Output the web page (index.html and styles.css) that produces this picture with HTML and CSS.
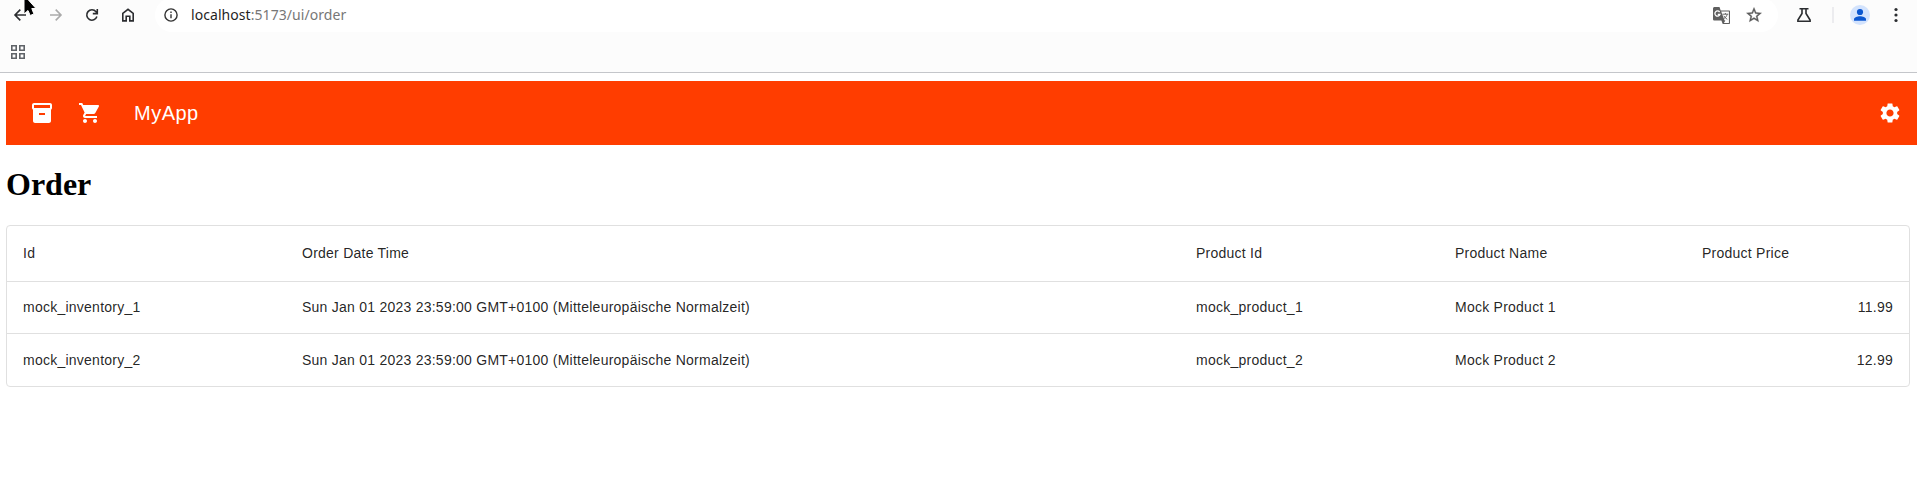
FILE: index.html
```html
<!DOCTYPE html>
<html lang="en">
<head>
<meta charset="utf-8">
<title>Order</title>
<link rel="stylesheet" href="styles.css">
</head>
<body>
<header class="browser">
  <div class="toolbar">
    <nav class="nav-buttons">
      <svg class="ico" viewBox="0 0 16 16"><path d="M14 8H3M8.300 2.600 3 8l5.300 5.400" /></svg>
      <svg class="ico ico-disabled" viewBox="0 0 16 16"><path d="M2 8h11M7.700 2.600 13 8l-5.300 5.400" /></svg>
      <svg class="ico" viewBox="0 0 16 16"><path d="M12.900 9.600A5.200 5.200 0 1 1 12 4.700l1.200 1.400M13.300 2v4.600H8.800" /></svg>
      <svg class="ico" viewBox="0 0 16 16"><path d="M2.800 13.900V6.300L8 2.300l5.200 4v7.600H9.800V9.200H6.200v4.700z" /></svg>
    </nav>
    <div class="omnibox">
      <svg class="info" viewBox="0 0 16 16"><circle cx="8" cy="8" r="6.100" /><path d="M8 7.300v4M8 4.600v1.500" /></svg>
      <span class="url"><span class="host">localhost</span>:5173/ui/order</span>
      <svg class="translate" viewBox="0 0 17 17"><path class="solid" d="M1.500 0h5l1.200 3.500H16c.6 0 1 .4 1 1V16c0 .6-.4 1-1 1H9.700L8.400 13.600H1.500C.7 13.600 0 13 0 12.200V1.500C0 .7.7 0 1.500 0z"/><path class="paper" d="M8.200 4.600h7.700v11.300h-5l1.500-2.300h-.8z"/><path class="g" d="M6.600 5A2.600 2.600 0 1 0 7 7.300H4.800"/><path class="glyph" d="M9.400 7.200h5.900M12.400 6v1.200M14.200 7.300c-.5 2-2 3.600-3.700 4.700M10.800 8.800c.8 1.500 2 2.700 3.500 3.500"/></svg>
      <svg class="star" viewBox="0 0 24 24"><path d="m22 9.240-7.190-.62L12 2 9.190 8.630 2 9.240l5.460 4.730L5.820 21 12 17.270 18.180 21l-1.630-7.030L22 9.240zM12 15.400l-3.760 2.270 1-4.280-3.320-2.880 4.380-.38L12 6.100l1.710 4.040 4.380.38-3.320 2.880 1 4.280L12 15.400z"/></svg>
    </div>
    <div class="tools">
      <svg class="ico flask" viewBox="0 0 16 16"><path d="M3.500 1.700h9M6 1.700v4.700L1.900 13.100v1.100h12.200v-1.100L10 6.400V1.700"/></svg>
      <span class="divider"></span>
      <svg class="avatar" viewBox="0 0 20 20"><circle class="avatar-bg" cx="10" cy="10" r="10"/><circle cx="10" cy="7" r="3.100"/><path d="M4 15.800v-1.500c0-2 3.500-3 6-3s6 1 6 3v1.500z"/></svg>
      <svg class="menu" viewBox="0 0 4 16"><circle cx="2" cy="2.500" r="1.600"/><circle cx="2" cy="8" r="1.600"/><circle cx="2" cy="13.500" r="1.600"/></svg>
    </div>
  </div>
  <div class="bookmarks">
    <svg class="apps" viewBox="0 0 14 14"><path d="M.8.8h4.400v4.400H.8zM8.800.8h4.400v4.400H8.800zM.8 8.800h4.400v4.400H.8zM8.800 8.800h4.400v4.400H8.800z"/></svg>
  </div>
</header>
<svg class="pointer" viewBox="0 0 16 20"><path d="M2-5v19l4-3.500 2.200 5 3.700-1.600L9.800 8.500H14z"/></svg>

<main class="page">
  <div class="appbar">
    <svg class="mui" viewBox="0 0 24 24"><path d="M20 2H4c-1 0-2 .9-2 2v3.010c0 .72.43 1.340 1 1.690V20c0 1.100 1.100 2 2 2h14c.9 0 2-.9 2-2V8.700c.57-.35 1-.97 1-1.690V4c0-1.100-1-2-2-2zm-5 12H9v-2h6v2zm5-7H4V4h16v3z"/></svg>
    <svg class="mui cart" viewBox="0 0 24 24"><path d="M7 18c-1.100 0-1.990.9-1.990 2S5.900 22 7 22s2-.9 2-2-.9-2-2-2zM1 2v2h2l3.600 7.590-1.350 2.450c-.16.28-.25.61-.25.96 0 1.100.9 2 2 2h12v-2H7.420c-.14 0-.25-.11-.25-.25l.03-.12.9-1.630h7.450c.75 0 1.410-.41 1.750-1.030l3.580-6.490c.08-.14.12-.31.12-.48 0-.55-.45-1-1-1H5.210l-.94-2H1zm16 16c-1.100 0-1.990.9-1.990 2s.89 2 1.990 2 2-.9 2-2-.9-2-2-2z"/></svg>
    <span class="brand">MyApp</span>
    <svg class="mui" viewBox="0 0 24 24"><path d="M19.140 12.940c.04-.3.06-.61.06-.94 0-.32-.02-.64-.07-.94l2.030-1.580c.18-.14.23-.41.12-.61l-1.920-3.320c-.12-.22-.37-.29-.59-.22l-2.390.96c-.5-.38-1.030-.7-1.620-.94l-.36-2.540c-.04-.24-.24-.41-.48-.41h-3.840c-.24 0-.43.17-.47.41l-.36 2.540c-.59.24-1.130.57-1.620.94l-2.390-.96c-.22-.08-.47 0-.59.22L2.740 8.870c-.12.21-.08.47.12.61l2.030 1.580c-.05.3-.09.63-.09.94s.02.64.07.94l-2.030 1.580c-.18.14-.23.41-.12.61l1.920 3.320c.12.22.37.29.59.22l2.390-.96c.5.38 1.030.7 1.620.94l.36 2.540c.05.24.24.41.48.41h3.840c.24 0 .44-.17.47-.41l.36-2.540c.59-.24 1.130-.56 1.620-.94l2.390.96c.22.08.47 0 .59-.22l1.920-3.320c.12-.22.07-.47-.12-.61l-2.010-1.580zM12 15.600c-1.980 0-3.600-1.620-3.600-3.600s1.620-3.600 3.600-3.600 3.600 1.620 3.600 3.600-1.620 3.600-3.600 3.600z"/></svg>
  </div>
  <h1 class="title">Order</h1>
  <div class="grid">
    <div class="row head"><span>Id</span><span>Order Date Time</span><span>Product Id</span><span>Product Name</span><span>Product Price</span></div>
    <div class="row first"><span>mock_inventory_1</span><span>Sun Jan 01 2023 23:59:00 GMT+0100 (Mitteleuropäische Normalzeit)</span><span>mock_product_1</span><span>Mock Product 1</span><span class="num">11.99</span></div>
    <div class="row last"><span>mock_inventory_2</span><span>Sun Jan 01 2023 23:59:00 GMT+0100 (Mitteleuropäische Normalzeit)</span><span>mock_product_2</span><span>Mock Product 2</span><span class="num">12.99</span></div>
  </div>
</main>
</body>
</html>
```
FILE: styles.css
```css
* { box-sizing: border-box; }
body { margin: 0; background: #fff; overflow: hidden; }
svg { display: block; flex: none; }

.browser { height: 73px; background: #fcfcfc; border-bottom: 1px solid #c4c6ca; }
.toolbar { display: flex; height: 32px; }
.nav-buttons { display: flex; gap: 20px; padding: 7px 0 0 12px; width: 155px; }
.ico { width: 16px; height: 16px; fill: none; stroke: #2b2d30; stroke-width: 1.6; }
.ico-disabled { stroke: #aaa; }

.omnibox { display: flex; align-items: center; width: 1623px; height: 34px; margin-top: -2px; padding: 0 15px 0 8px; border-radius: 17px; background: #fff; }
.info { width: 16px; height: 16px; fill: none; stroke: #333; stroke-width: 1.4; }
.url { flex: 1; margin-left: 12px; font: 14px/20px "Noto Sans", sans-serif; letter-spacing: 0.06px; color: #777; }
.host { color: #1f1f1f; }
.translate { width: 17px; height: 17px; margin-right: 15px; }
.solid { fill: #5f5f5f; }
.paper { fill: #fff; }
.g { fill: none; stroke: #fff; stroke-width: 1.3; }
.glyph { fill: none; stroke: #666; stroke-width: 1; }
.star { width: 18px; height: 18px; fill: #5a5a5a; stroke: #5a5a5a; stroke-width: 0.5; }

.tools { display: flex; align-items: center; height: 30px; padding-left: 18px; }
.flask { stroke-width: 1.6; }
.divider { width: 2px; height: 16px; margin-left: 20px; background: #ececef; }
.avatar { width: 20px; height: 20px; margin-left: 16px; fill: #0b57d0; }
.avatar-bg { fill: #d3e3fd; }
.menu { width: 4px; height: 16px; margin-left: 24px; fill: #2b2d30; }
.bookmarks { padding: 13px 0 0 11px; }
.apps { width: 14px; height: 14px; fill: none; stroke: #5f6368; stroke-width: 1.6; }
.pointer { position: absolute; left: 22px; top: 0; width: 16px; height: 20px; fill: #000; stroke: #fff; stroke-width: 1; }

.page { padding: 8px 0 0 6px; }
.appbar { display: flex; align-items: center; height: 64px; padding: 0 15px 0 24px; background: #ff3d00; color: #fff; }
.mui { width: 24px; height: 24px; fill: #fff; }
.cart { margin-left: 24px; }
.brand { flex: 1; margin-left: 32px; font: 500 20px/32px "Liberation Sans", Arial, sans-serif; letter-spacing: 0.5px; }
.title { margin: 21px 0 22px; font: bold 32px/37px "Liberation Serif", "Times New Roman", serif; color: #000; }

.grid { width: 1904px; border: 1px solid #e0e0e0; border-radius: 4px; font: 14px/20px "Liberation Sans", Arial, sans-serif; letter-spacing: 0.245px; color: rgba(0, 0, 0, 0.87); }
.row { display: grid; grid-template-columns: 279px 894px 259px 247px 1fr; align-items: center; height: 52px; padding: 0 16px; border-bottom: 1px solid #e0e0e0; }
.head { height: 56px; padding-bottom: 2px; }
.first { padding-bottom: 2px; }
.last { border-bottom: 0; }
.num { text-align: right; }
```
